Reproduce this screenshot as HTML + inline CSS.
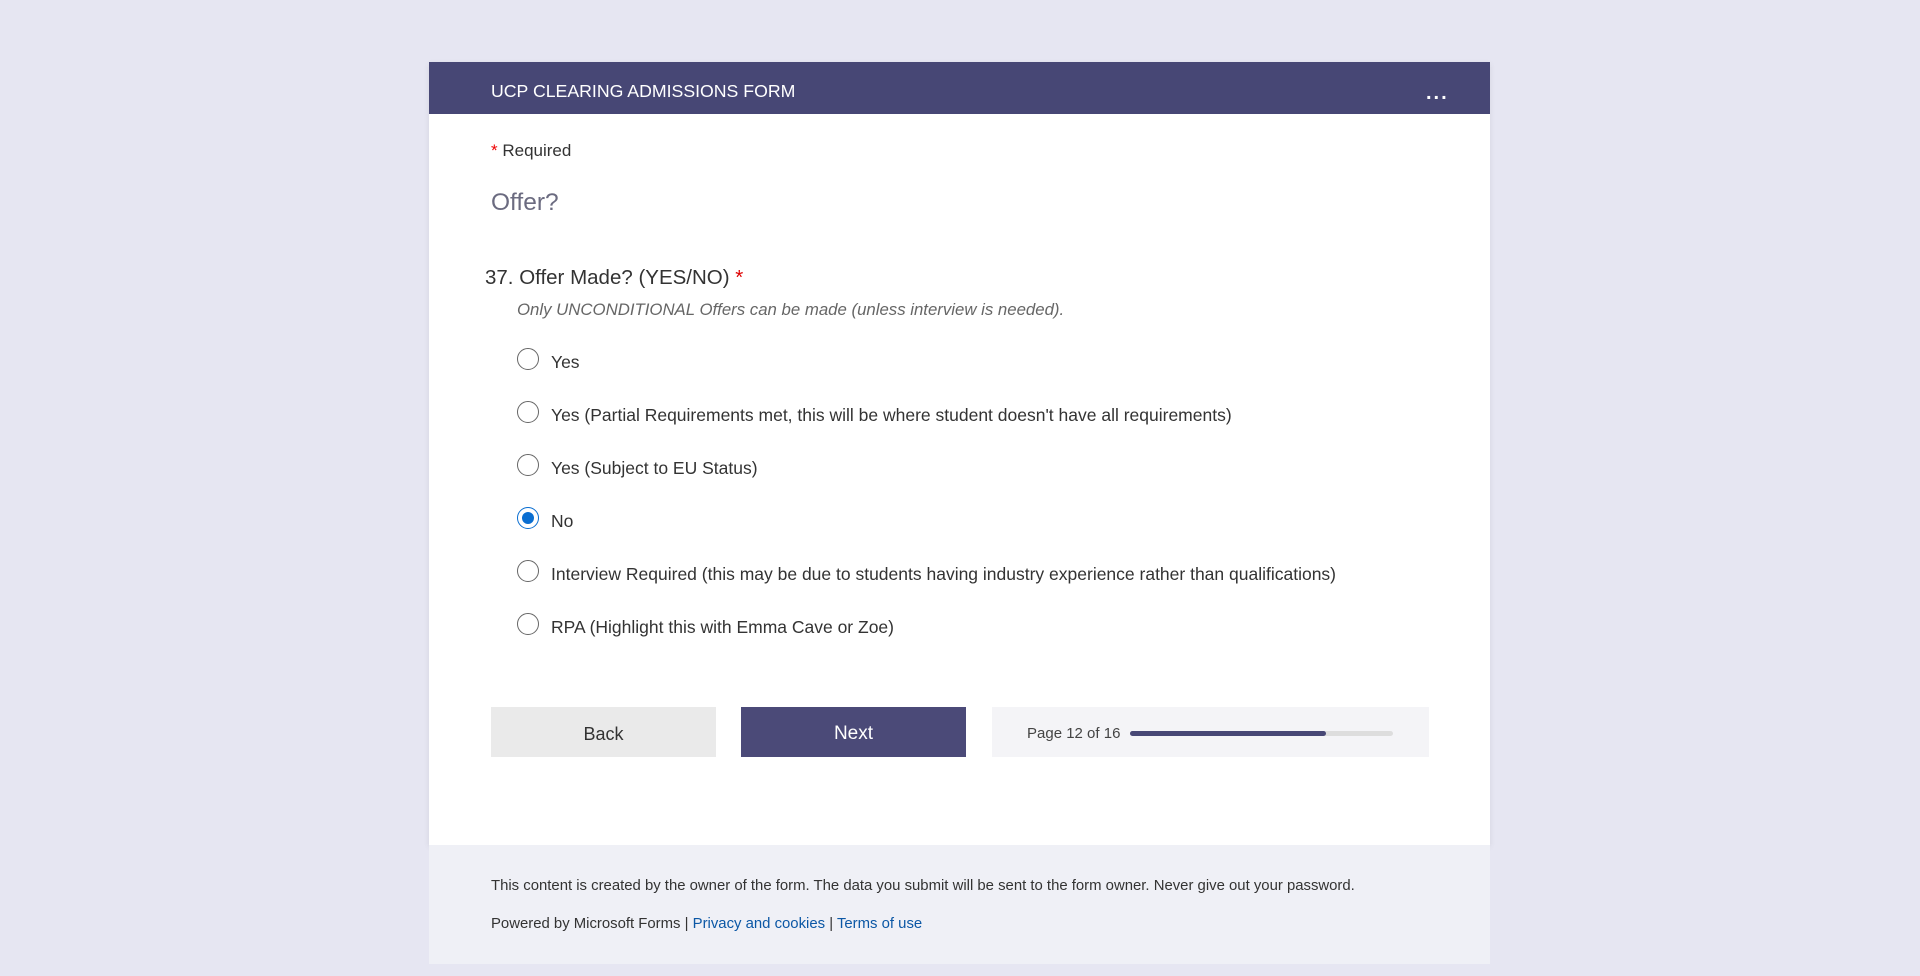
<!DOCTYPE html>
<html><head><meta charset="utf-8"><style>
body{margin:0;width:1920px;height:976px;background:#e6e6f2;font-family:"Segoe UI","Liberation Sans",sans-serif;position:relative;overflow:hidden}
.a{position:absolute;white-space:nowrap}
.card{position:absolute;left:429px;top:62px;width:1061px;height:783px;background:#fff;box-shadow:0 2px 6px rgba(0,0,0,.08)}
.hdr{position:absolute;left:429px;top:62px;width:1061px;height:52px;background:#474775}
.foot{position:absolute;left:429px;top:845px;width:1061px;height:119px;background:#eff0f6}
.r{position:absolute;left:517px;width:20px;height:20px;border:1px solid #666;border-radius:50%;background:#fff}
.l{position:absolute;left:551px;font-size:17.5px;color:#333;white-space:nowrap}
</style></head><body>
<div class="card"></div>
<div class="hdr"></div>
<div class="a" style="left:491px;top:81px;font-size:17.7px;color:#fff">UCP CLEARING ADMISSIONS FORM</div>
<div class="a" style="left:1426px;top:82px;font-size:20px;font-weight:bold;color:#fff;letter-spacing:2px">...</div>
<div class="a" style="left:491px;top:141px;font-size:17px;color:#333"><span style="color:#e00">*</span> Required</div>
<div class="a" style="left:491px;top:189px;font-size:24.5px;color:#6b6b80">Offer?</div>
<div class="a" style="left:485px;top:266px;font-size:20.5px;color:#333">37. Offer Made? (YES/NO) <span style="color:#d00">*</span></div>
<div class="a" style="left:517px;top:300px;font-size:16.8px;color:#666;font-style:italic">Only UNCONDITIONAL Offers can be made (unless interview is needed).</div>
<div class="r" style="top:348px"></div><div class="l" style="top:352px">Yes</div>
<div class="r" style="top:401px"></div><div class="l" style="top:405px">Yes (Partial Requirements met, this will be where student doesn't have all requirements)</div>
<div class="r" style="top:454px"></div><div class="l" style="top:458px">Yes (Subject to EU Status)</div>
<div class="r" style="top:507px;border-color:#0a6ed1"><div style="position:absolute;left:4px;top:4px;width:12px;height:12px;border-radius:50%;background:#0a6ed1"></div></div><div class="l" style="top:511px">No</div>
<div class="r" style="top:560px"></div><div class="l" style="top:564px">Interview Required (this may be due to students having industry experience rather than qualifications)</div>
<div class="r" style="top:613px"></div><div class="l" style="top:617px">RPA (Highlight this with Emma Cave or Zoe)</div>
<div class="a" style="left:491px;top:707px;width:225px;height:50px;background:#eaeaea;color:#333;font-size:18px;text-align:center;line-height:54px">Back</div>
<div class="a" style="left:741px;top:707px;width:225px;height:50px;background:#4b4a78;color:#fff;font-size:19px;text-align:center;line-height:54px">Next</div>
<div class="a" style="left:992px;top:707px;width:437px;height:50px;background:#f4f4f7"></div>
<div class="a" style="left:1027px;top:725px;font-size:15px;color:#444">Page 12 of 16</div>
<div class="a" style="left:1130px;top:731px;width:263px;height:5px;border-radius:3px;background:#ddd"></div>
<div class="a" style="left:1130px;top:731px;width:196px;height:5px;border-radius:3px;background:#474775"></div>
<div class="foot"></div>
<div class="a" style="left:491px;top:878px;font-size:14.9px;color:#333">This content is created by the owner of the form. The data you submit will be sent to the form owner. Never give out your password.</div>
<div class="a" style="left:491px;top:916px;font-size:14.9px;color:#333">Powered by Microsoft Forms | <span style="color:#0b57a5">Privacy and cookies</span> | <span style="color:#0b57a5">Terms of use</span></div>
</body></html>
